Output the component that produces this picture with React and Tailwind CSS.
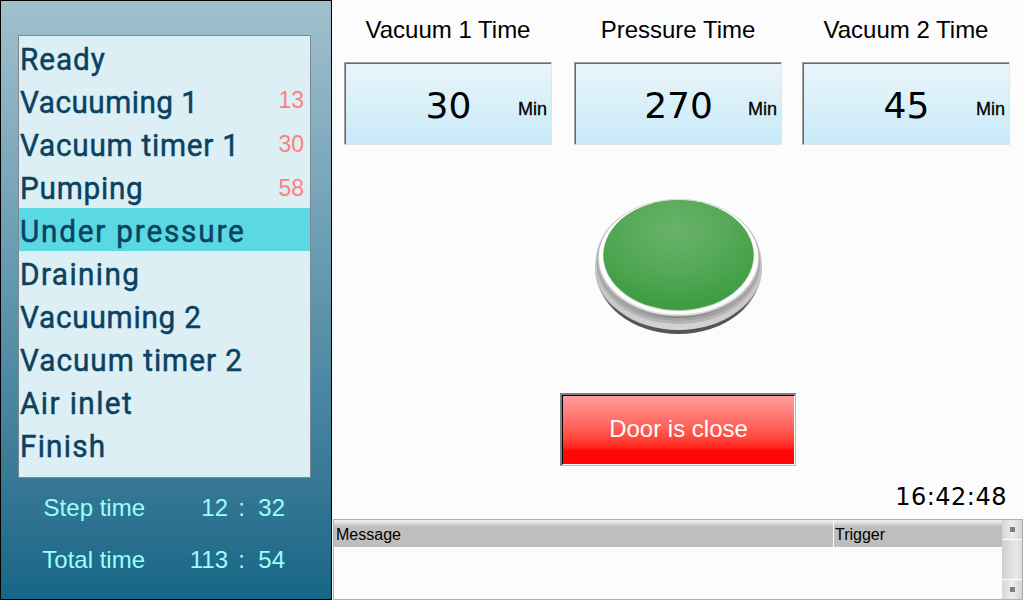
const steps = [
  { label: "Ready", spacing: "tracking-[1px]" },
  { label: "Vacuuming 1", spacing: "tracking-[0.5px]", value: "13", offset: "pb-[1px]" },
  { label: "Vacuum timer 1", spacing: "tracking-[0.8px]", value: "30", offset: "pt-[1px]" },
  { label: "Pumping", spacing: "tracking-[0.8px]", value: "58", offset: "pt-[3px]" },
  { label: "Under pressure", spacing: "tracking-[1.9px]", active: true },
  { label: "Draining", spacing: "tracking-[1.5px]" },
  { label: "Vacuuming 2", spacing: "tracking-[0.8px]" },
  { label: "Vacuum timer 2", spacing: "tracking-[1.05px]" },
  { label: "Air inlet", spacing: "tracking-[1.5px]" },
  { label: "Finish", spacing: "tracking-[1.3px]" },
];

function StepRow({ label, spacing, value, offset, active }) {
  return (
    <li className={`flex h-[43px] items-center justify-between pr-[6px] pl-px ${active ? "bg-[#5bd9e2]" : ""}`}>
      <span className={`origin-left scale-x-[0.93] pt-[3px] font-['Roboto',sans-serif] text-[32px] leading-[39px] whitespace-nowrap text-[#0b425f] [-webkit-text-stroke:0.5px_#0b425f] ${spacing}`}>
        {label}
      </span>
      {value && <span className={`text-[23px] leading-[43px] text-[#ff7f7f] ${offset}`}>{value}</span>}
    </li>
  );
}

function Elapsed({ label, minutes, seconds }) {
  return (
    <div className="flex h-[52px] items-center text-[24px] leading-[28px] text-[#99ffff]">
      <span className="w-[144px] text-right">{label}</span>
      <span className="w-[83px] text-right">{minutes}</span>
      <span className="w-[17px] text-right">:</span>
      <span className="w-[40px] text-right">{seconds}</span>
    </div>
  );
}

function TimeSetting({ title, value }) {
  return (
    <div className="flex w-[208px] flex-col">
      <h2 className="h-[62px] pt-[16px] text-center text-[24px] leading-[28px] whitespace-nowrap">{title}</h2>
      <div className="h-[83px] border border-t-[#a0a0a0] border-r-[#e3e3e3] border-b-[#e3e3e3] border-l-[#a0a0a0]">
        <div className="flex h-full items-center border-t border-l border-[#696969] bg-linear-to-b from-[#e9f5fa] to-[#c8eaf8]">
          <span className="w-[172px] pt-[4px] pl-[33px] text-center font-['DejaVu_Sans',sans-serif] text-[36px] leading-[42px]">
            {value}
          </span>
          <span className="pt-[9px] text-[18px] leading-[20px] [-webkit-text-stroke:0.3px_black]">Min</span>
        </div>
      </div>
    </div>
  );
}

function PushButton() {
  return (
    <svg width="170" height="138" viewBox="0 0 170 138" className="block">
      <defs>
        <radialGradient id="cap" cx="0.48" cy="0.28" r="0.72">
          <stop offset="0" stopColor="#69b36b" />
          <stop offset="0.5" stopColor="#55a958" />
          <stop offset="0.85" stopColor="#43a046" />
          <stop offset="1" stopColor="#3f9a42" />
        </radialGradient>
        <linearGradient id="base" x1="0" x2="0" y1="0" y2="1">
          <stop offset="0" stopColor="#d8d8d8" />
          <stop offset="0.55" stopColor="#c4c4c4" />
          <stop offset="0.85" stopColor="#cbcbcb" />
          <stop offset="1" stopColor="#d4d4d4" />
        </linearGradient>
        <linearGradient id="neck" x1="0" x2="1" y1="0" y2="0">
          <stop offset="0" stopColor="#bcbcbc" />
          <stop offset="0.2" stopColor="#a0a0a0" />
          <stop offset="0.5" stopColor="#808080" />
          <stop offset="0.8" stopColor="#a0a0a0" />
          <stop offset="1" stopColor="#bcbcbc" />
        </linearGradient>
        <linearGradient id="foot" x1="0" x2="0" y1="0.3" y2="0.65">
          <stop offset="0" stopColor="#b8b8b8" />
          <stop offset="1" stopColor="#555555" />
        </linearGradient>
      </defs>
      <path d="M1 70a83.500 66 0 0 0 167 0z" fill="url(#foot)" />
      <path d="M1 69a83.500 63 0 0 0 167 0C168 47 158 27 138 16H31C11 27 1 47 1 69z" fill="url(#base)" />
      <ellipse cx="84.500" cy="66" rx="82" ry="60" fill="#b4b4b4" />
      <ellipse cx="84.500" cy="63.500" rx="81.500" ry="59.500" fill="#a2a2a2" />
      <ellipse cx="84.500" cy="61.500" rx="81" ry="58.500" fill="url(#neck)" />
      <ellipse cx="84.500" cy="59.800" rx="80.500" ry="58.300" fill="#e4e4e4" stroke="#b0b0b0" strokeWidth="0.7" />
      <ellipse cx="84.500" cy="58.800" rx="79.500" ry="57.200" fill="#fff" />
      <ellipse cx="84.500" cy="57.500" rx="75.500" ry="55.500" fill="#a9cfaa" />
      <ellipse cx="84.500" cy="57" rx="75" ry="55" fill="url(#cap)" />
    </svg>
  );
}

function ScrollEnd() {
  return (
    <div className="flex h-[19px] items-center justify-center bg-linear-to-r from-[#d6d6d6] via-[#ececec] to-[#d4d4d4]">
      <span className="size-[5px] bg-[#808080]" />
    </div>
  );
}

function MessageLog() {
  const header = "bg-linear-to-b from-[#f4f4f4] via-[#c9c9c9] via-20% to-[#bebebe] to-25% pt-px";
  return (
    <div className="mr-px flex h-[81px] border border-[#b0b0b0]">
      <div className="flex flex-1 flex-col">
        <div className="flex h-[27px] text-[16px] leading-[28px]">
          <span className={`w-[499px] pl-[2px] ${header}`}>Message</span>
          <span className={`ml-px flex-1 pl-px ${header}`}>Trigger</span>
        </div>
      </div>
      <div className="flex w-[20px] flex-col gap-px bg-white">
        <ScrollEnd />
        <div className="flex-1 bg-linear-to-r from-[#cfcfcf] via-[#e9e9e9] via-70% to-[#dadada]" />
        <ScrollEnd />
      </div>
    </div>
  );
}

export default function App() {
  return (
    <main className="flex h-[600px] w-[1024px] overflow-hidden bg-[#fcfcfc] font-['Liberation_Sans',Arial,sans-serif] text-black">
      <aside className="h-full w-[332px] shrink-0 border border-black bg-linear-to-b from-[#a1c0cc] via-[#659ab1] via-45% to-[#166686] pt-[34px]">
        <ul className="ml-[17px] h-[443px] w-[293px] border border-[#808790] bg-[#dceff4]">
          {steps.map((step) => (
            <StepRow key={step.label} {...step} />
          ))}
        </ul>
        <div className="pt-[4px]">
          <Elapsed label="Step time" minutes="12" seconds="32" />
          <Elapsed label="Total time" minutes="113" seconds="54" />
        </div>
      </aside>
      <section className="flex flex-1 flex-col pl-px">
        <div className="flex h-[145px] pl-[11px]">
          <TimeSetting title="Vacuum 1 Time" value="30" />
          <div className="w-[22px]" />
          <TimeSetting title="Pressure Time" value="270" />
          <div className="w-[20px]" />
          <TimeSetting title="Vacuum 2 Time" value="45" />
        </div>
        <div className="mt-[53px] ml-[261px]">
          <PushButton />
        </div>
        <div className="mt-[57px] ml-[227px] h-[73px] w-[236px] border-t-2 border-r border-b border-l-2 border-t-[#808080] border-r-[#b8b8b8] border-b-[#b8b8b8] border-l-[#808080]">
          <div className="flex h-full items-center justify-center border border-t-black border-r-white border-b-white border-l-black bg-linear-to-b from-[#ff9c9c] via-[#ff0808] via-80% to-[#ff0505] pb-[2px] text-[24px] leading-[28px] text-white">
            Door is close
          </div>
        </div>
        <time className="h-[53px] pt-[16px] pr-[17px] text-right font-['DejaVu_Sans',sans-serif] text-[24px] leading-[30px] tracking-[0.5px]">
          16:42:48
        </time>
        <MessageLog />
      </section>
    </main>
  );
}
